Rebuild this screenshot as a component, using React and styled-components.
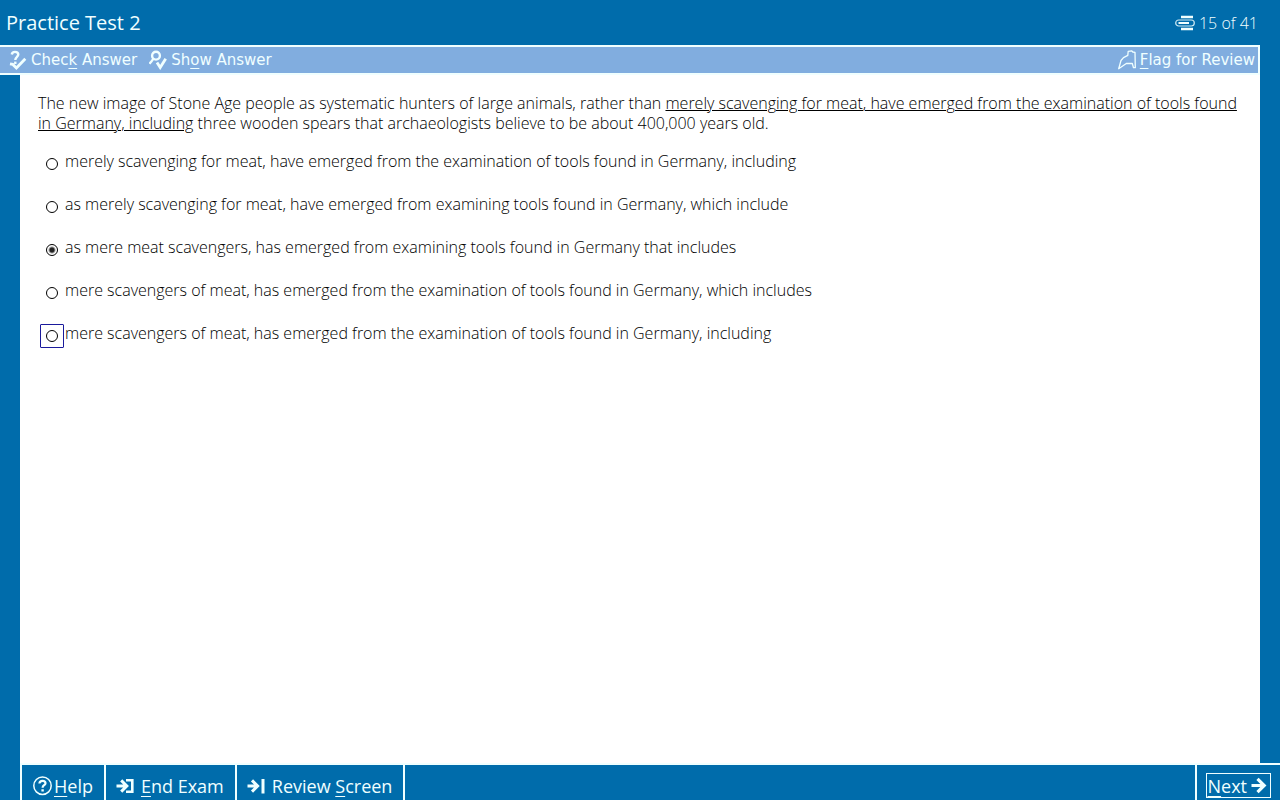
import React, { useState } from "react";
import styled, { createGlobalStyle, css } from "styled-components";

const BLUE = "#006cab";
const TOOLBAR = "#81addf";
const LIGHT = "#f0ffff";

const GlobalStyle = createGlobalStyle`
  *, *::before, *::after { box-sizing: border-box; }
  body {
    margin: 0;
    background: ${BLUE};
    font-family: "Open Sans", "Liberation Sans", sans-serif;
    font-size: 16px;
  }
`;

const Page = styled.div`
  min-height: 100vh;
  display: flex;
  flex-direction: column;
  background: ${BLUE};
`;

const Header = styled.header`
  display: flex;
  align-items: center;
  justify-content: space-between;
  height: 45px;
  padding: 0 22px 0 6px;
  color: ${LIGHT};
`;

const Title = styled.h1`
  margin: 0;
  font-size: 20px;
  font-weight: 400;
  line-height: 28px;
`;

const Progress = styled.div`
  display: flex;
  align-items: center;
  gap: 4px;
  font-weight: 300;
  line-height: 20px;
`;

const Toolbar = styled.div`
  display: flex;
  align-items: center;
  gap: 12px;
  height: 30px;
  margin-right: 20px;
  padding: 0 3px 0 9px;
  background: ${TOOLBAR};
  border: 2px solid ${LIGHT};
  border-left: 0;
`;

const plainButton = css`
  display: flex;
  align-items: center;
  margin: 0;
  border: 0;
  background: none;
  color: ${LIGHT};
  cursor: pointer;
  white-space: nowrap;
`;

const ToolButton = styled.button`
  ${plainButton}
  gap: 4px;
  padding: 0;
  font-family: "DejaVu Sans", sans-serif;
  font-size: 15px;
  font-weight: 400;
  line-height: 20px;
  margin-left: ${(p) => (p.$end ? "auto" : 0)};
`;

const Key = styled.span`
  text-decoration: underline;
  text-decoration-thickness: 1px;
  text-underline-offset: 3px;
`;

const Content = styled.main`
  flex: 1;
  display: flex;
  flex-direction: column;
  gap: 19px;
  margin: 0 20px;
  padding: 18px 18px 20px;
  background: #fff;
  color: #000;
  font-weight: 300;
`;

const Question = styled.p`
  margin: 0;
  line-height: 20px;
`;

const Marked = styled.u`
  text-decoration-thickness: 1px;
  text-underline-offset: 1px;
`;

const Options = styled.div`
  display: flex;
  flex-direction: column;
  gap: 19px;
  padding-left: 2px;
`;

const Option = styled.label`
  display: flex;
  align-items: flex-start;
  align-self: flex-start;
  gap: 1px;
  min-height: 24px;
  line-height: 18px;
  cursor: pointer;
`;

const RadioBox = styled.span`
  display: flex;
  align-items: center;
  justify-content: center;
  flex: none;
  width: 24px;
  height: 24px;
  border: 1px solid ${(p) => (p.$current ? "#1a1a9c" : "transparent")};
  border-radius: 1px;
`;

const Radio = styled.input`
  appearance: none;
  width: 12px;
  height: 12px;
  margin: 0;
  border: 1px solid #000;
  border-radius: 50%;
  background: #fff;
  outline: none;
  &:checked {
    background: radial-gradient(circle, #222 0 2px, #999 3px, #fff 4px);
  }
`;

const Footer = styled.footer`
  display: flex;
  height: 37px;
  margin-left: 20px;
  border-top: 2px solid ${LIGHT};
  border-left: 2px solid ${LIGHT};
`;

const FooterButton = styled.button`
  ${plainButton}
  gap: ${(p) => (p.$tight ? 2 : 6)}px;
  padding: 7px 11px 0 10px;
  border-right: 2px solid ${LIGHT};
  font-family: inherit;
  font-size: 18px;
  line-height: 24px;
`;

const NextCell = styled.div`
  margin-left: auto;
  padding: 8px 9px 0;
  border-left: 2px solid ${LIGHT};
`;

const NextButton = styled.button`
  ${plainButton}
  gap: 4px;
  height: 25px;
  padding: 0 3px 0 0;
  border: 1px solid ${LIGHT};
  font-family: inherit;
  font-size: 18px;
  line-height: 22px;
`;

const Icon = styled.svg`
  display: block;
  flex: none;
  fill: none;
  stroke: ${LIGHT};
`;

const PagesIcon = () => (
  <Icon width="20" height="16" viewBox="0 0 20 16" aria-hidden="true">
    <path d="M6 2h12M6 14h12" strokeWidth="2.4" />
    <path d="M3.500 8h10.500" strokeWidth="2" />
    <rect x="0.700" y="5" width="18.600" height="6" rx="3" strokeWidth="1.200" opacity="0.85" />
  </Icon>
);

const CheckIcon = () => (
  <Icon width="18" height="20" viewBox="0 0 18 20" strokeWidth="2.4" aria-hidden="true">
    <path d="M2.800 4.500C3 2.600 4.300 1.900 6 1.900c2 0 3.300 1 3.300 2.700 0 2.300-3 2.300-3 5.400" />
    <path d="M5.100 12.800h2.400" />
    <path d="M1 13.800l2.800.6 3.600 3.500L16.300 8.700" strokeWidth="2.800" />
  </Icon>
);

const ShowIcon = () => (
  <Icon width="18" height="20" viewBox="0 0 18 20" strokeWidth="2.400" aria-hidden="true">
    <circle cx="7" cy="5.700" r="3.900" />
    <path d="M4.300 8.400C3.500 11 2 11.500 0.500 13.800" />
    <path d="M8 12.500l3.200 5L16.700 8.700" strokeWidth="2.800" />
  </Icon>
);

const FlagIcon = () => (
  <Icon width="18" height="20" viewBox="0 0 18 20" strokeWidth="1.300" strokeLinejoin="round" aria-hidden="true">
    <path d="M0.700 18.700L3 10.500 5.500 7.600 9.800 5.400 10.200 1.300 13.800 0.800 14.800 2 17 2.300 17.300 17.700 15.500 17.700 14.300 13.500 8.300 13.500z" />
  </Icon>
);

const HelpIcon = () => (
  <Icon width="20" height="20" viewBox="0 0 20 20" aria-hidden="true">
    <circle cx="10.500" cy="9.700" r="8.700" strokeWidth="1.500" />
    <path d="M7.400 7.500c.2-1.900 1.400-2.700 3.100-2.700s3 .9 3 2.400c0 2-2.900 2-2.900 4.500M9.400 14.300h2.400" strokeWidth="2.200" />
  </Icon>
);

const EndIcon = () => (
  <Icon width="19" height="18" viewBox="0 0 19 18" aria-hidden="true">
    <path d="M0.500 9h10.500M5.200 3.400L10.800 9l-5.600 5.600" strokeWidth="3" />
    <path d="M10 3.200h6.300v11.600H10" strokeWidth="2.600" />
  </Icon>
);

const ReviewIcon = () => (
  <Icon width="19" height="18" viewBox="0 0 19 18" strokeWidth="3" aria-hidden="true">
    <path d="M0.500 9h10M5 3.400L10.600 9 5 14.600M16 2v14.500" />
  </Icon>
);

const NextIcon = () => (
  <Icon width="16" height="18" viewBox="0 0 16 18" strokeWidth="3.200" aria-hidden="true">
    <path d="M0.500 8.500h12.500M6.500 1.800L13.200 8.500 6.500 15.200" />
  </Icon>
);

const CHOICES = [
  "merely scavenging for meat, have emerged from the examination of tools found in Germany, including",
  "as merely scavenging for meat, have emerged from examining tools found in Germany, which include",
  "as mere meat scavengers, has emerged from examining tools found in Germany that includes",
  "mere scavengers of meat, has emerged from the examination of tools found in Germany, which includes",
  "mere scavengers of meat, has emerged from the examination of tools found in Germany, including",
];

export default function App() {
  const [answer, setAnswer] = useState(2);
  const [current, setCurrent] = useState(4);

  return (
    <Page>
      <GlobalStyle />
      <Header>
        <Title>Practice Test 2</Title>
        <Progress>
          <PagesIcon />
          <span>15 of 41</span>
        </Progress>
      </Header>
      <Toolbar role="toolbar">
        <ToolButton type="button">
          <CheckIcon />
          <span>Chec<Key>k</Key> Answer</span>
        </ToolButton>
        <ToolButton type="button">
          <ShowIcon />
          <span>Sh<Key>o</Key>w Answer</span>
        </ToolButton>
        <ToolButton type="button" $end>
          <FlagIcon />
          <span><Key>F</Key>lag for Review</span>
        </ToolButton>
      </Toolbar>
      <Content>
        <Question id="question">
          The new image of Stone Age people as systematic hunters of large animals, rather than{" "}
          <Marked>
            merely scavenging for meat, have emerged from the examination of tools found in Germany, including
          </Marked>{" "}
          three wooden spears that archaeologists believe to be about 400,000 years old.
        </Question>
        <Options role="radiogroup" aria-labelledby="question">
          {CHOICES.map((text, i) => (
            <Option key={text}>
              <RadioBox $current={current === i}>
                <Radio
                  type="radio"
                  name="answer"
                  checked={answer === i}
                  onFocus={() => setCurrent(i)}
                  onChange={() => setAnswer(i)}
                />
              </RadioBox>
              <span>{text}</span>
            </Option>
          ))}
        </Options>
      </Content>
      <Footer>
        <FooterButton type="button" $tight>
          <HelpIcon />
          <span><Key>H</Key>elp</span>
        </FooterButton>
        <FooterButton type="button">
          <EndIcon />
          <span><Key>E</Key>nd Exam</span>
        </FooterButton>
        <FooterButton type="button">
          <ReviewIcon />
          <span>Review <Key>S</Key>creen</span>
        </FooterButton>
        <NextCell>
          <NextButton type="button">
            <span><Key>N</Key>ext</span>
            <NextIcon />
          </NextButton>
        </NextCell>
      </Footer>
    </Page>
  );
}
